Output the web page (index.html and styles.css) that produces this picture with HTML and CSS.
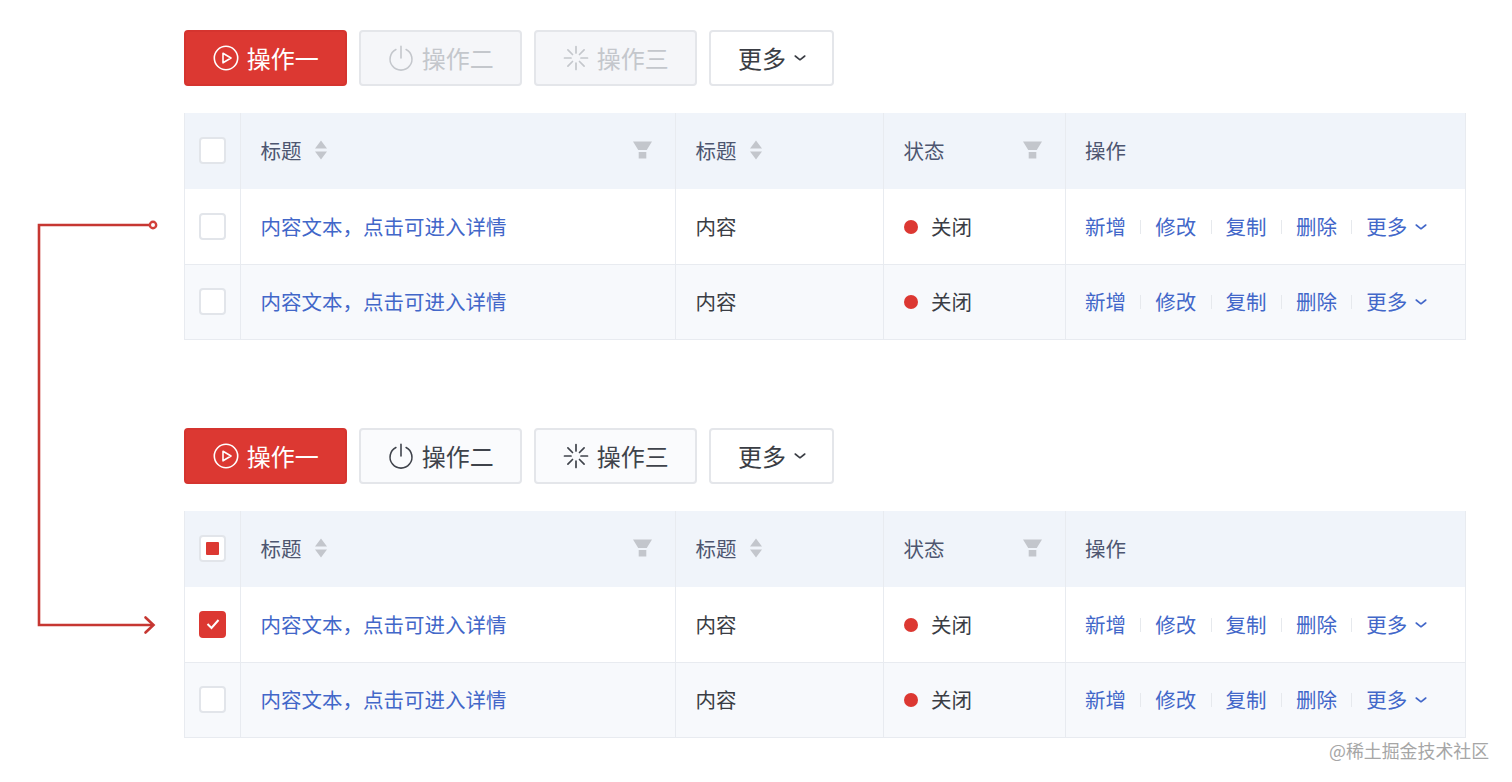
FILE: index.html
```html
<!DOCTYPE html>
<html lang="zh-CN">

<head>
    <meta charset="UTF-8">
    <meta name="viewport" content="width=device-width, initial-scale=1.0">
    <title>表格操作</title>
    <link rel="stylesheet" href="styles.css">
</head>

<body>
    <svg class="defs" width="0" height="0">
        <symbol id="i_play" viewBox="0 0 26 26">
            <circle cx="13" cy="13" r="11.7" fill="none" stroke="currentColor" stroke-width="1.6" />
            <path d="M10 8.2 L18 13 L10 17.8 Z" fill="none" stroke="currentColor" stroke-width="1.6" stroke-linejoin="round" />
        </symbol>
        <symbol id="i_power" viewBox="0 0 28 28">
            <path d="M8.5 4.8 A11.8 11.8 0 1 0 19.5 4.8" fill="none" stroke="currentColor" stroke-width="1.7" stroke-linecap="round" />
            <path d="M14 1.5 V14" fill="none" stroke="currentColor" stroke-width="1.7" stroke-linecap="round" />
        </symbol>
        <symbol id="i_load" viewBox="0 0 26 26">
            <path d="M13 1.5 V8 M13 18 V24.5 M1.5 13 H8 M18 13 H24.5 M4.9 4.9 L9.5 9.5 M16.5 16.5 L21.1 21.1 M21.1 4.9 L16.5 9.5 M9.5 16.5 L4.9 21.1" fill="none" stroke="currentColor" stroke-width="1.7" stroke-linecap="round" />
        </symbol>
        <symbol id="i_down" viewBox="0 0 12 8">
            <path d="M1.2 2 L6 5.8 L10.8 2" fill="none" stroke="currentColor" stroke-width="1.6" stroke-linecap="round" stroke-linejoin="round" />
        </symbol>
        <symbol id="i_sort" viewBox="0 0 12 20">
            <path d="M6 0.5 L12 8.5 H0 Z M0 11.5 H12 L6 19.5 Z" fill="#c3c6cc" />
        </symbol>
        <symbol id="i_filter" viewBox="0 0 20 18">
            <path d="M0 0 H20 L14.5 9 H5.5 Z M6 11 H14 V18 H6 Z" fill="#c3c6cc" />
        </symbol>
    </svg>

    <svg class="connector" width="170" height="430" viewBox="0 0 170 430">
        <path d="M149 10 H39 V410 H153" fill="none" stroke="#c63732" stroke-width="2.6" />
        <circle cx="153" cy="10" r="3.2" fill="#fff" stroke="#d2403a" stroke-width="2.4" />
        <path d="M145.500 402.500 L153.500 410 L145.500 417.500" fill="none" stroke="#c63732" stroke-width="2.6" stroke-linecap="round" />
    </svg>

    <section class="block">
        <div class="toolbar">
            <button class="btn btn_primary btn_wide"><svg class="btn_icon"><use href="#i_play" /></svg>操作一</button>
            <button class="btn btn_disabled btn_wide"><svg class="btn_icon"><use href="#i_power" /></svg>操作二</button>
            <button class="btn btn_disabled btn_wide"><svg class="btn_icon"><use href="#i_load" /></svg>操作三</button>
            <button class="btn btn_more">更多<svg class="caret"><use href="#i_down" /></svg></button>
        </div>
        <div class="table">
            <div class="row row_head">
                <div class="cell cell_check"><span class="check"></span></div>
                <div class="cell cell_title">标题<svg class="sort"><use href="#i_sort" /></svg><svg class="filter"><use href="#i_filter" /></svg></div>
                <div class="cell">标题<svg class="sort"><use href="#i_sort" /></svg></div>
                <div class="cell">状态<svg class="filter"><use href="#i_filter" /></svg></div>
                <div class="cell cell_last">操作</div>
            </div>
            <div class="row">
                <div class="cell cell_check"><span class="check"></span></div>
                <div class="cell"><a class="link">内容文本，点击可进入详情</a></div>
                <div class="cell">内容</div>
                <div class="cell"><i class="dot"></i>关闭</div>
                <div class="cell cell_last actions"><a class="link">新增</a><a class="link">修改</a><a class="link">复制</a><a class="link">删除</a><a class="link">更多<svg class="caret"><use href="#i_down" /></svg></a></div>
            </div>
            <div class="row row_alt">
                <div class="cell cell_check"><span class="check"></span></div>
                <div class="cell"><a class="link">内容文本，点击可进入详情</a></div>
                <div class="cell">内容</div>
                <div class="cell"><i class="dot"></i>关闭</div>
                <div class="cell cell_last actions"><a class="link">新增</a><a class="link">修改</a><a class="link">复制</a><a class="link">删除</a><a class="link">更多<svg class="caret"><use href="#i_down" /></svg></a></div>
            </div>
        </div>
    </section>

    <section class="block">
        <div class="toolbar">
            <button class="btn btn_primary btn_wide"><svg class="btn_icon"><use href="#i_play" /></svg>操作一</button>
            <button class="btn btn_normal btn_wide"><svg class="btn_icon"><use href="#i_power" /></svg>操作二</button>
            <button class="btn btn_normal btn_wide"><svg class="btn_icon"><use href="#i_load" /></svg>操作三</button>
            <button class="btn btn_more">更多<svg class="caret"><use href="#i_down" /></svg></button>
        </div>
        <div class="table">
            <div class="row row_head">
                <div class="cell cell_check"><span class="check check_part"></span></div>
                <div class="cell cell_title">标题<svg class="sort"><use href="#i_sort" /></svg><svg class="filter"><use href="#i_filter" /></svg></div>
                <div class="cell">标题<svg class="sort"><use href="#i_sort" /></svg></div>
                <div class="cell">状态<svg class="filter"><use href="#i_filter" /></svg></div>
                <div class="cell cell_last">操作</div>
            </div>
            <div class="row">
                <div class="cell cell_check"><span class="check check_on"><svg width="14" height="12" viewBox="0 0 14 12"><path d="M1.500 6 L5.500 10 L12.500 2" fill="none" stroke="#fff" stroke-width="2" /></svg></span></div>
                <div class="cell"><a class="link">内容文本，点击可进入详情</a></div>
                <div class="cell">内容</div>
                <div class="cell"><i class="dot"></i>关闭</div>
                <div class="cell cell_last actions"><a class="link">新增</a><a class="link">修改</a><a class="link">复制</a><a class="link">删除</a><a class="link">更多<svg class="caret"><use href="#i_down" /></svg></a></div>
            </div>
            <div class="row row_alt">
                <div class="cell cell_check"><span class="check"></span></div>
                <div class="cell"><a class="link">内容文本，点击可进入详情</a></div>
                <div class="cell">内容</div>
                <div class="cell"><i class="dot"></i>关闭</div>
                <div class="cell cell_last actions"><a class="link">新增</a><a class="link">修改</a><a class="link">复制</a><a class="link">删除</a><a class="link">更多<svg class="caret"><use href="#i_down" /></svg></a></div>
            </div>
        </div>
    </section>

    <div class="watermark">@稀土掘金技术社区</div>
</body>

</html>
```

FILE: styles.css
```css
html,
body {
    height: 100%;
}

body {
    position: relative;
    margin: 0;
    box-sizing: border-box;
    padding: 30px 46px 0 184px;
    overflow: hidden;
    background-color: #fff;
    color: #3a3d44;
    font-family: "Noto Sans CJK SC", "Liberation Sans", sans-serif;
    font-size: 20.5px;
}

.defs {
    position: absolute;
}

.connector {
    position: absolute;
    left: 0;
    top: 215px;
}

.watermark {
    position: absolute;
    left: 1329px;
    top: 738px;
    color: #a6a6a6;
    font-size: 17.900px;
    line-height: 24px;
    white-space: nowrap;
}

.block + .block {
    margin-top: 88px;
}

.toolbar {
    display: flex;
    gap: 12.500px;
    height: 56px;
    margin-bottom: 27px;
}

.btn {
    display: flex;
    align-items: center;
    justify-content: center;
    gap: 8px;
    box-sizing: border-box;
    height: 56px;
    padding: 0 0 2px 1px;
    border: 2px solid #e4e6ea;
    border-radius: 4px;
    font-family: inherit;
    font-size: 24px;
}

.btn_wide {
    width: 162.500px;
}

.btn_primary {
    background-color: #dc3832;
    border-color: #d5342f;
    color: #fff;
}

.btn_disabled {
    background-color: #f5f6f9;
    color: #c4c7cc;
}

.btn_normal {
    background-color: #fafbfd;
    color: #3f434b;
}

.btn_more {
    width: 125px;
    background-color: #fff;
    color: #3a3d44;
}

.btn_icon {
    width: 26px;
    height: 26px;
    margin-top: 2px;
}

.caret {
    width: 12px;
    height: 8px;
    margin: 2px 0 0 8px;
}

.btn .caret {
    margin-left: 0;
}

.table {
    border: 1px solid #e8ebf0;
    border-top: 0;
    width: 1282px;
    box-sizing: border-box;
}

.row {
    display: grid;
    grid-template-columns: 56px 435px 208px 182px 1fr;
    height: 76px;
    background-color: #fff;
    border-bottom: 1px solid #e8ebf0;
    box-sizing: border-box;
}

.row:last-child {
    height: 74px;
    border-bottom: 0;
}

.row_head {
    background-color: #f0f4fa;
    border-bottom: 0;
    color: #4d5670;
}

.row_alt {
    background-color: #f7f9fc;
}

.cell {
    display: flex;
    align-items: center;
    padding: 0 23px 2px 19.500px;
    border-right: 1px solid #e8ebf0;
    white-space: nowrap;
}

.cell_check {
    justify-content: center;
    padding: 0 0 1px;
}

.cell_last {
    padding-left: 19px;
    border-right: 0;
}

.check {
    display: flex;
    align-items: center;
    justify-content: center;
    box-sizing: border-box;
    width: 27px;
    height: 27px;
    background-color: #fff;
    border: 2px solid #e2e5ea;
    border-radius: 4px;
}

.check_part::after {
    content: "";
    width: 13px;
    height: 13px;
    background-color: #dc3832;
    border-radius: 1px;
}

.check_on {
    background-color: #dc3832;
    border-color: #dc3832;
}

.sort {
    width: 12px;
    height: 20px;
    margin-left: 13px;
}

.filter {
    width: 19px;
    height: 18px;
    margin-left: auto;
}

.link {
    display: flex;
    align-items: center;
    color: #4267c9;
}

.dot {
    width: 14px;
    height: 14px;
    margin: 2px 13.500px 0 0;
    border-radius: 50%;
    background-color: #dc3832;
}

.actions {
    gap: 29.300px;
}

.actions .link {
    position: relative;
}

.actions .link + .link::before {
    content: "";
    position: absolute;
    left: -15px;
    top: 50%;
    width: 1px;
    height: 14px;
    margin-top: -6px;
    background-color: #e6e9ed;
}
```
